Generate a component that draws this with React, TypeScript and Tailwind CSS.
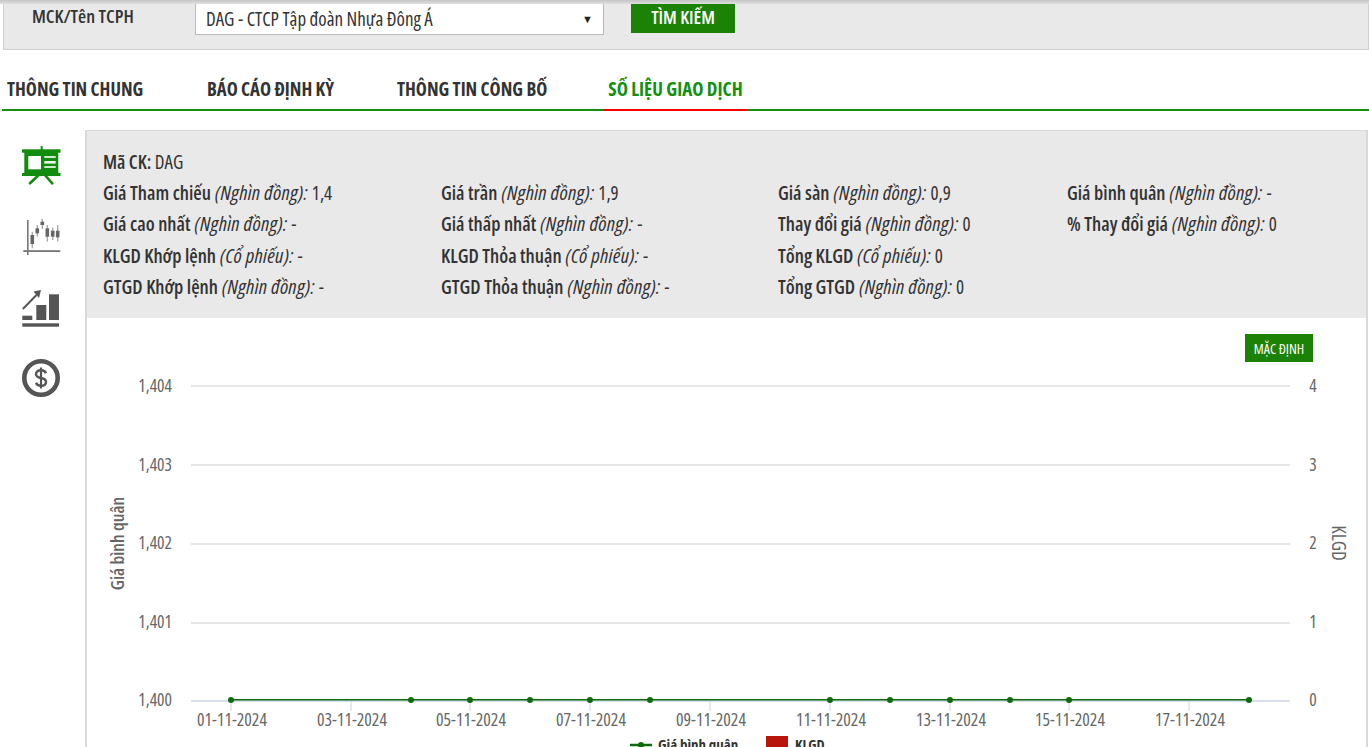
const font = "font-['Open_Sans','Noto_Sans',sans-serif] [font-stretch:75%]";

const tabs = [
  { label: 'THÔNG TIN CHUNG', width: 'w-[200px]' },
  { label: 'BÁO CÁO ĐỊNH KỲ', width: 'w-[190px]' },
  { label: 'THÔNG TIN CÔNG BỐ', width: 'w-[212px]' },
];

type Info = { label: string; unit?: string; value: string };

const columns: { width: string; rows: Info[] }[] = [
  {
    width: 'w-[338px]',
    rows: [
      { label: 'Giá Tham chiếu', unit: '(Nghìn đồng):', value: '1,4' },
      { label: 'Giá cao nhất', unit: '(Nghìn đồng):', value: '-' },
      { label: 'KLGD Khớp lệnh', unit: '(Cổ phiếu):', value: '-' },
      { label: 'GTGD Khớp lệnh', unit: '(Nghìn đồng):', value: '-' },
    ],
  },
  {
    width: 'w-[337px]',
    rows: [
      { label: 'Giá trần', unit: '(Nghìn đồng):', value: '1,9' },
      { label: 'Giá thấp nhất', unit: '(Nghìn đồng):', value: '-' },
      { label: 'KLGD Thỏa thuận', unit: '(Cổ phiếu):', value: '-' },
      { label: 'GTGD Thỏa thuận', unit: '(Nghìn đồng):', value: '-' },
    ],
  },
  {
    width: 'w-[289px]',
    rows: [
      { label: 'Giá sàn', unit: '(Nghìn đồng):', value: '0,9' },
      { label: 'Thay đổi giá', unit: '(Nghìn đồng):', value: '0' },
      { label: 'Tổng KLGD', unit: '(Cổ phiếu):', value: '0' },
      { label: 'Tổng GTGD', unit: '(Nghìn đồng):', value: '0' },
    ],
  },
  {
    width: 'w-[290px]',
    rows: [
      { label: 'Giá bình quân', unit: '(Nghìn đồng):', value: '-' },
      { label: '% Thay đổi giá', unit: '(Nghìn đồng):', value: '0' },
    ],
  },
];

const InfoRow = ({ label, unit, value }: Info) => (
  <div className="h-[31.3px] leading-[31px] whitespace-nowrap text-[19px] text-[#333]">
    <b className="mr-[4px] text-[19.3px] font-semibold">{label}</b>
    <i className="mr-[4px] text-[20.5px] tracking-[0.25px]">{unit}</i>
    {value}
  </div>
);

const BoardIcon = () => (
  <svg width="39" height="39" viewBox="0 0 39 39" fill="#128c0e" className="block">
    <rect x="18.7" y="0" width="2" height="4" />
    <rect x="0" y="3.3" width="38.5" height="3.4" />
    <rect x="2.3" y="5" width="34" height="23" />
    <rect x="0" y="27" width="38.5" height="3" />
    <rect x="6.3" y="10" width="12.7" height="13.3" fill="#fff" />
    <rect x="22.3" y="10" width="11.4" height="2" fill="#cfe8ce" />
    <rect x="22.3" y="15" width="11.4" height="2.6" fill="#eef7ee" />
    <rect x="22.3" y="20" width="11.4" height="2" fill="#cfe8ce" />
    <path d="M15.7 30L8 37.3M23.7 30l6.6 7.3" stroke="#128c0e" strokeWidth="2.6" strokeLinecap="round" fill="none" />
  </svg>
);

const candles = [
  { x: 10.3, w1: 13.7, w2: 30.3, y1: 17, y2: 26 },
  { x: 15.3, w1: 7, w2: 18.5, y1: 10.3, y2: 15.3 },
  { x: 20.3, w1: 1, w2: 11, y1: 3.7, y2: 7 },
  { x: 25.3, w1: 7, w2: 23.5, y1: 10.3, y2: 18.7 },
  { x: 30.7, w1: 9.5, w2: 22, y1: 12.7, y2: 18.7 },
  { x: 35.7, w1: 7, w2: 23.5, y1: 12.7, y2: 19.3 },
];

const CandleIcon = () => (
  <svg width="39" height="39" viewBox="0 0 39 39" className="block">
    <rect x="5" y="2" width="1.6" height="35" fill="#777" />
    <rect x="1.3" y="32.2" width="37" height="1.8" fill="#777" />
    {candles.map((c) => (
      <g key={c.x}>
        <line x1={c.x} x2={c.x} y1={c.w1} y2={c.w2} stroke="#aaa" strokeWidth="1.4" />
        <rect x={c.x - 1.8} y={c.y1} width="3.6" height={c.y2 - c.y1} fill="#666" />
      </g>
    ))}
  </svg>
);

const GrowthIcon = () => (
  <svg width="39" height="37" viewBox="0 0 39 37" fill="#555" className="block">
    <rect x="0.3" y="25.7" width="10" height="4.3" />
    <rect x="14.3" y="15" width="10" height="15" />
    <rect x="27" y="4.3" width="10" height="25.7" />
    <rect x="0.3" y="33.3" width="36.7" height="3.4" />
    <path d="M0.8 19L14.5 5" stroke="#555" strokeWidth="2" fill="none" />
    <path d="M11.5 1.5L19 0l-2 8z" />
  </svg>
);

const DollarIcon = () => (
  <svg width="38" height="38" viewBox="0 0 38 38" className="-mt-[1px] block">
    <circle cx="19" cy="19" r="16.7" fill="none" stroke="#555" strokeWidth="4.6" />
    <path d="M24 14.2c-.8-2-2.8-3-5-3-3 0-5 1.6-5 3.9s2 3.4 5 3.9 5 1.6 5 3.9-2 3.9-5 3.9c-2.2 0-4.2-1-5-3" fill="none" stroke="#555" strokeWidth="2.4" />
    <path d="M19 8.5v21" stroke="#555" strokeWidth="2.2" />
  </svg>
);

const yLeft = ['1,404', '1,403', '1,402', '1,401', '1,400'];
const yRight = ['4', '3', '2', '1', '0'];
const gridY = [386, 465, 544, 623, 701];
const labelY = [392, 471, 549, 628, 706];
const ticks = [231, 351, 470, 590, 710, 830, 950, 1069, 1189];
const dates = ['01-11-2024', '03-11-2024', '05-11-2024', '07-11-2024', '09-11-2024', '11-11-2024', '13-11-2024', '15-11-2024', '17-11-2024'];
const dots = [231, 411, 470, 530, 590, 650, 830, 890, 950, 1010, 1069, 1249];

// chart coordinates are page pixels, hence the viewBox offset
const Chart = () => (
  <svg width="1279" height="429" viewBox="87 318 1279 429" className="block" style={{ fontStretch: '75%' }} fontFamily="Open Sans, Noto Sans, sans-serif">
    {gridY.map((y, i) => (
      <line key={y} x1="191" x2="1290" y1={y} y2={y} stroke={i === 4 ? '#c8d5e4' : '#dedede'} strokeWidth="1.5" />
    ))}
    {yLeft.map((t, i) => (
      <text key={t} x="172" y={labelY[i]} textAnchor="end" fontSize="17.5" fill="#666">{t}</text>
    ))}
    {yRight.map((t, i) => (
      <text key={t} x="1313" y={labelY[i]} textAnchor="middle" fontSize="17.5" fill="#666">{t}</text>
    ))}
    {ticks.map((x, i) => (
      <g key={x}>
        <line x1={x} x2={x} y1="701" y2="711" stroke="#c8d5e4" />
        <text x={x + 1} y="726" textAnchor="middle" fontSize="17.7" fill="#666">{dates[i]}</text>
      </g>
    ))}
    <line x1="231" x2="1249" y1="699.7" y2="699.7" stroke="#0c6b0c" strokeWidth="1.5" />
    {dots.map((x) => (
      <circle key={x} cx={x} cy="700" r="3" fill="#0c6b0c" />
    ))}
    <text transform="translate(124 543.5) rotate(-90)" textAnchor="middle" fontSize="18.3" fontWeight="600" fill="#666">Giá bình quân</text>
    <text transform="translate(1332 543) rotate(90)" textAnchor="middle" fontSize="19" fontWeight="500" fill="#666">KLGD</text>
    <line x1="630" x2="652" y1="745" y2="745" stroke="#0c6b0c" strokeWidth="2.5" />
    <circle cx="641" cy="745" r="3" fill="#0c6b0c" />
    <text x="658" y="750" fontSize="15" fontWeight="700" fill="#333">Giá bình quân</text>
    <rect x="766" y="736" width="22" height="14" fill="#b8160d" />
    <text x="795" y="750" fontSize="14.5" fontWeight="700" fill="#333">KLGD</text>
  </svg>
);

export default function App() {
  return (
    <div className={`${font} relative h-[747px] w-[1369px] overflow-hidden bg-white text-[#333]`}>
      <div className="h-[4px] bg-gradient-to-b from-[#c4c4c4] to-[#e0e0e0]" />

      {/* search */}
      <div className="ml-[3px] flex h-[46px] items-start border border-[#cfcfcf] border-t-0 bg-[#e9e9e9]">
        <div className="w-[191px] pl-[28px] text-[18.7px] font-semibold leading-[24px]">MCK/Tên TCPH</div>
        <div className="flex h-[31px] w-[409px] items-center justify-between border border-[#bbb] border-t-0 bg-white pl-[10px] pr-[10px] text-[19px]">
          <span>DAG - CTCP Tập đoàn Nhựa Đông Á</span>
          <span className="text-[11px] text-[#222]">▼</span>
        </div>
        <div className="ml-[27px] flex h-[29px] w-[104px] items-center justify-center bg-[#1c8205] pb-[4px] text-[18.5px] font-semibold text-white">TÌM KIẾM</div>
      </div>

      {/* tabs */}
      <div className="mt-[19px] ml-[2px] flex h-[42px] items-start border-b-2 border-[#149010]">
        {tabs.map((t) => (
          <div key={t.label} className={`${t.width} pl-[5px] text-[18.7px] font-bold leading-[40px] text-[#333] whitespace-nowrap`}>{t.label}</div>
        ))}
        <div className="relative h-[40px] w-[143px] text-center text-[19px] font-bold leading-[40px] whitespace-nowrap text-[#149010]">
          SỐ LIỆU GIAO DỊCH
          <div className="absolute bottom-[-2px] left-0 right-0 h-[2px] bg-[#f00]" />
        </div>
      </div>

      <div className="mt-[19px] flex">
        <div className="flex w-[85px] flex-col items-start gap-[33px] pl-[22px] pt-[16px]">
          <BoardIcon />
          <CandleIcon />
          <GrowthIcon />
          <DollarIcon />
        </div>
        <div className="w-[1283px] border-2 border-t border-[#d9d9d9] border-b-0 bg-white">
          <div className="h-[187px] bg-[#e9e9e9] pl-[16px] pt-[16px]">
            <div className="h-[30px] text-[19px] leading-[31px]"><b className="font-semibold">Mã CK:</b> DAG</div>
            <div className="flex">
              {columns.map((c) => (
                <div key={c.width} className={c.width}>
                  {c.rows.map((r) => <InfoRow key={r.label} {...r} />)}
                </div>
              ))}
            </div>
          </div>
          <div className="relative h-[429px]">
            <Chart />
            <div className="absolute left-[1158px] top-[16px] flex h-[28px] w-[68px] items-center justify-center bg-[#1c8205] text-[14px] font-medium text-white">MẶC ĐỊNH</div>
          </div>
        </div>
      </div>
    </div>
  );
}
